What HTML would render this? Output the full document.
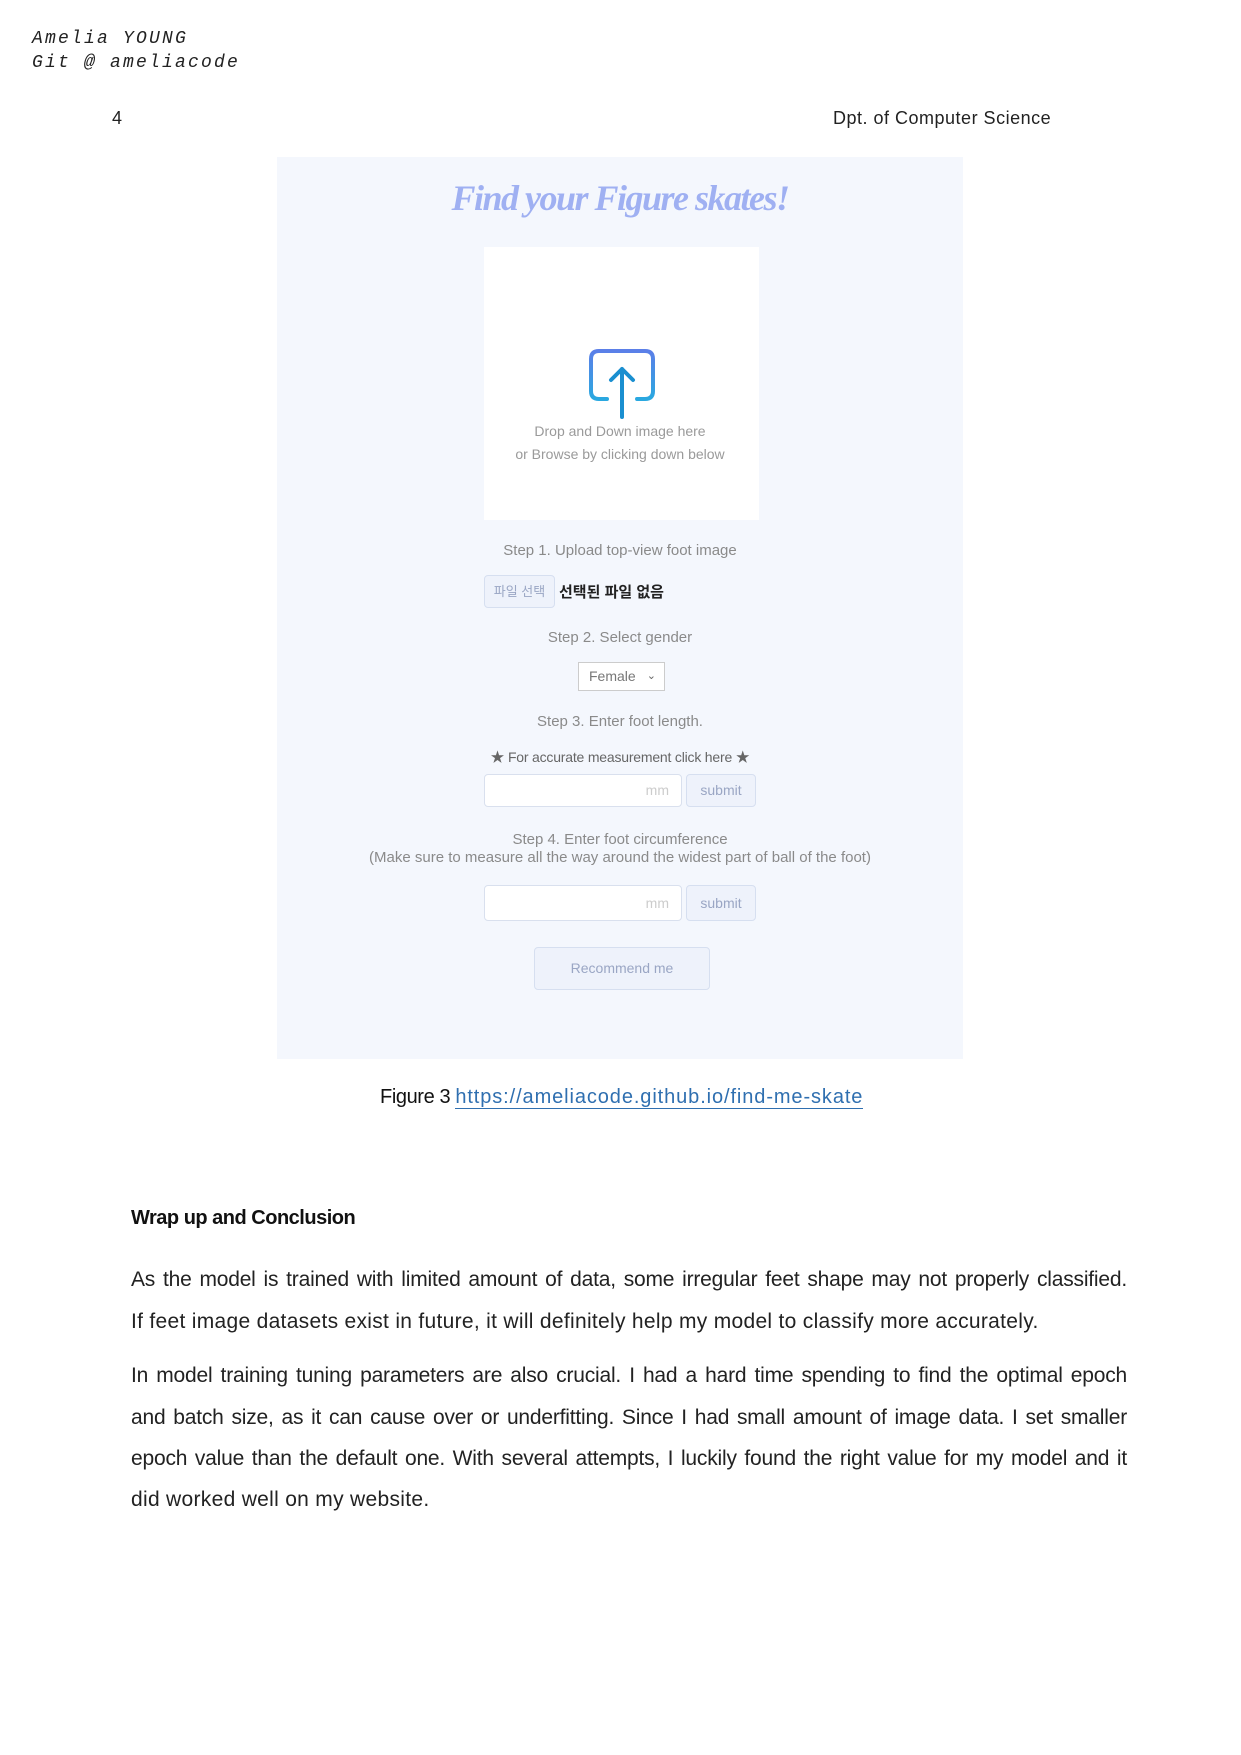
<!DOCTYPE html>
<html><head><meta charset="utf-8"><style>
*{margin:0;padding:0;box-sizing:border-box}
body{width:1241px;height:1755px;background:#fff;position:relative;font-family:"Liberation Sans","Noto Sans CJK KR",sans-serif;overflow:hidden}
.a{position:absolute;white-space:nowrap}
.mono{font-family:"Liberation Mono",monospace;font-style:italic;font-size:18px;color:#222;letter-spacing:2.2px}
.panel{position:absolute;left:277px;top:157px;width:686px;height:902px;background:#f4f7fd}
.c{position:absolute;left:0;width:686px;text-align:center;color:#8a8a8a;font-size:15px}
.btn{position:absolute;background:#eef2fb;border:1px solid #d6dff0;border-radius:4px;color:#9aa6c4;font-size:14px;text-align:center}
.inp{position:absolute;background:#fff;border:1px solid #d9e0ee;border-radius:4px;color:#ccc;font-size:14px;text-align:right;padding-right:12px}
.ln{position:absolute;left:131px;width:996px;font-size:21px;color:#222;text-align:justify;text-align-last:justify;letter-spacing:-0.2px;white-space:nowrap}
</style></head><body>
<div class="a mono" style="left:32px;top:29px">Amelia YOUNG</div>
<div class="a mono" style="left:32px;top:53px">Git @ ameliacode</div>
<div class="a" style="left:112px;top:108px;font-size:18px;color:#222">4</div>
<div class="a" style="left:833px;top:108px;font-size:18px;color:#222;letter-spacing:0.5px">Dpt. of Computer Science</div>

<div class="panel">
 <div class="c" style="top:20px;font-family:'Liberation Serif',serif;font-style:italic;font-weight:bold;font-size:36px;color:#9fb0f2;letter-spacing:-1.5px">Find your Figure skates!</div>
 <div style="position:absolute;left:207px;top:90px;width:275px;height:273px;background:#fff"></div>
 <svg style="position:absolute;left:310px;top:190px" width="70" height="75" viewBox="0 0 70 75">
  <defs><linearGradient id="g" x1="0" y1="0" x2="0" y2="1"><stop offset="0" stop-color="#5b7fe8"/><stop offset="1" stop-color="#2aa8e0"/></linearGradient></defs>
  <path d="M20 52 H12 Q4 52 4 44 V12 Q4 4 12 4 H58 Q66 4 66 12 V44 Q66 52 58 52 H50" fill="none" stroke="url(#g)" stroke-width="4" stroke-linecap="round"/>
  <path d="M35 70 V22 M24 33 L35 22 L46 33" fill="none" stroke="#1a8fd0" stroke-width="4" stroke-linecap="round" stroke-linejoin="round"/>
 </svg>
 <div class="c" style="top:266px;font-size:14px;color:#9a9a9a">Drop and Down image here</div>
 <div class="c" style="top:289px;font-size:14px;color:#9a9a9a">or Browse by clicking down below</div>
 <div class="c" style="top:385px">Step 1. Upload top-view foot image</div>
 <div class="btn" style="left:207px;top:418px;width:71px;height:33px;line-height:31px;font-size:13px">파일 선택</div>
 <div class="a" style="left:282px;top:424px;font-size:15px;color:#222;font-weight:bold">선택된 파일 없음</div>
 <div class="c" style="top:472px">Step 2. Select gender</div>
 <div style="position:absolute;left:301px;top:505px;width:87px;height:29px;background:#fff;border:1px solid #ccc;font-size:14px;color:#777;line-height:27px;padding-left:10px">Female <span style="position:absolute;right:8px;top:0;font-size:11px;color:#666">&#x2304;</span></div>
 <div class="c" style="top:556px">Step 3. Enter foot length.</div>
 <div class="c" style="top:590px;font-size:14px;color:#666;letter-spacing:-0.2px">★ For accurate measurement click here ★</div>
 <div class="inp" style="left:207px;top:617px;width:198px;height:33px;line-height:31px">mm</div>
 <div class="btn" style="left:409px;top:617px;width:70px;height:33px;line-height:31px">submit</div>
 <div class="c" style="top:674px;font-size:15px">Step 4. Enter foot circumference</div>
 <div class="c" style="top:692px;font-size:15px">(Make sure to measure all the way around the widest part of ball of the foot)</div>
 <div class="inp" style="left:207px;top:728px;width:198px;height:36px;line-height:34px">mm</div>
 <div class="btn" style="left:409px;top:728px;width:70px;height:36px;line-height:34px">submit</div>
 <div class="btn" style="left:257px;top:790px;width:176px;height:43px;line-height:41px">Recommend me</div>
</div>

<div class="a" style="left:380px;top:1086px;font-size:20px;color:#111;letter-spacing:-0.4px">Figure 3 <span style="color:#2f6fb0;border-bottom:1px solid #2f6fb0;letter-spacing:0.9px">https://ameliacode.github.io/find-me-skate</span></div>
<div class="a" style="left:131px;top:1207px;font-size:20px;font-weight:bold;color:#111;letter-spacing:-0.5px">Wrap up and Conclusion</div>
<div class="ln" style="top:1268px">As the model is trained with limited amount of data, some irregular feet shape may not properly classified.</div>
<div class="ln" style="top:1310px;text-align-last:left;letter-spacing:0.3px">If feet image datasets exist in future, it will definitely help my model to classify more accurately.</div>
<div class="ln" style="top:1364px">In model training tuning parameters are also crucial. I had a hard time spending to find the optimal epoch</div>
<div class="ln" style="top:1406px">and batch size, as it can cause over or underfitting. Since I had small amount of image data. I set smaller</div>
<div class="ln" style="top:1447px">epoch value than the default one. With several attempts, I luckily found the right value for my model and it</div>
<div class="ln" style="top:1488px;text-align-last:left;letter-spacing:0.3px">did worked well on my website.</div>
</body></html>
